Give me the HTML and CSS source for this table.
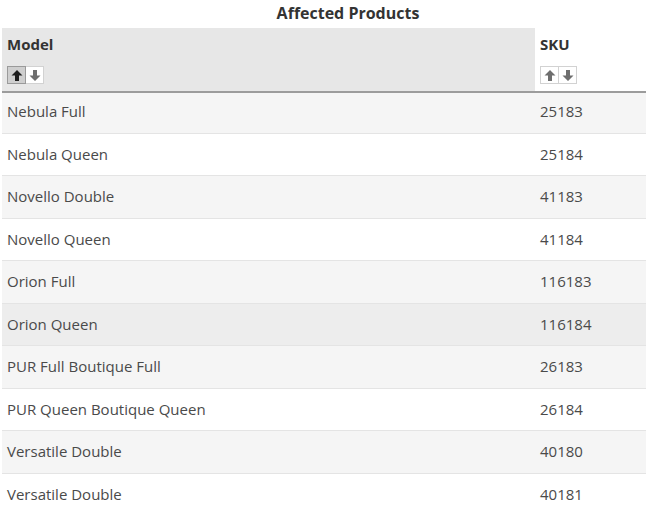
FILE: index.html
```html
<!DOCTYPE html>
<html lang="en">
<head>
<meta charset="utf-8">
<title>Affected Products</title>
<link rel="stylesheet" href="styles.css">
</head>
<body>
<div class="wrap">
<table class="products">
  <caption class="title">Affected Products</caption>
  <thead>
    <tr>
      <th class="col-model sorted">
        <div class="th-label">Model</div>
        <div class="sorter">
          <span class="sort-btn active"><svg viewBox="0 0 12 12" class="arrow"><path d="M6 0.5 L11.5 6 H8 V11.5 H4 V6 H0.5 Z"/></svg></span><span class="sort-btn"><svg viewBox="0 0 12 12" class="arrow"><path d="M6 11.5 L11.5 6 H8 V0.5 H4 V6 H0.5 Z"/></svg></span>
        </div>
      </th>
      <th class="col-sku">
        <div class="th-label">SKU</div>
        <div class="sorter">
          <span class="sort-btn"><svg viewBox="0 0 12 12" class="arrow"><path d="M6 0.5 L11.5 6 H8 V11.5 H4 V6 H0.5 Z"/></svg></span><span class="sort-btn"><svg viewBox="0 0 12 12" class="arrow"><path d="M6 11.5 L11.5 6 H8 V0.5 H4 V6 H0.5 Z"/></svg></span>
        </div>
      </th>
    </tr>
  </thead>
  <tbody>
    <tr><td>Nebula Full</td><td>25183</td></tr>
    <tr><td>Nebula Queen</td><td>25184</td></tr>
    <tr><td>Novello Double</td><td>41183</td></tr>
    <tr><td>Novello Queen</td><td>41184</td></tr>
    <tr><td>Orion Full</td><td>116183</td></tr>
    <tr class="hover"><td>Orion Queen</td><td>116184</td></tr>
    <tr><td>PUR Full Boutique Full</td><td>26183</td></tr>
    <tr><td>PUR Queen Boutique Queen</td><td>26184</td></tr>
    <tr><td>Versatile Double</td><td>40180</td></tr>
    <tr><td>Versatile Double</td><td>40181</td></tr>
  </tbody>
</table>
</div>
</body>
</html>
```

FILE: styles.css
```css
html, body {
  margin: 0;
  padding: 0;
  overflow: hidden;
  background: #ffffff;
}

body {
  font-family: "Open Sans", "Liberation Sans", sans-serif;
  font-size: 15px;
  color: #4a4a4a;
}

.wrap {
  padding-left: 2px;
}

.products {
  width: 692px;
  border-collapse: collapse;
  border-spacing: 0;
}

.title {
  font-size: 16px;
  font-weight: 700;
  color: #333333;
  line-height: 20px;
  padding: 3px 0 5px;
  text-align: center;
}

.products th {
  text-align: left;
  vertical-align: top;
  font-weight: 700;
  color: #333333;
  padding: 6px 5px 7px;
  border-bottom: 2px solid #9c9c9c;
  background: #ffffff;
}

.products th.sorted {
  background: #e7e7e7;
}

.col-model {
  width: 523px;
}

.th-label {
  line-height: 20px;
}

.sorter {
  display: flex;
  margin-top: 12px;
  height: 18px;
}

.sort-btn {
  display: flex;
  align-items: center;
  justify-content: center;
  flex: none;
  width: 17px;
  height: 16px;
  border: 1px solid #d2d2d2;
  background: #ffffff;
  margin-right: -1px;
}

.sort-btn.active {
  background: #cfcfcf;
  border-color: #9a9a9a;
  position: relative;
  z-index: 1;
}

.arrow {
  width: 12px;
  height: 13px;
  fill: #6e6e6e;
}

.sort-btn.active .arrow {
  fill: #1e1e1e;
}

.products td {
  padding: 11px 5px;
  line-height: 19.5px;
  border-top: 1px solid #e4e4e4;
}

.products tbody tr:first-child td {
  border-top: none;
  padding-top: 9px;
}

.products tbody tr:nth-child(odd) {
  background: #f5f5f5;
}

.products tbody tr.hover {
  background: #ededed;
}
```
